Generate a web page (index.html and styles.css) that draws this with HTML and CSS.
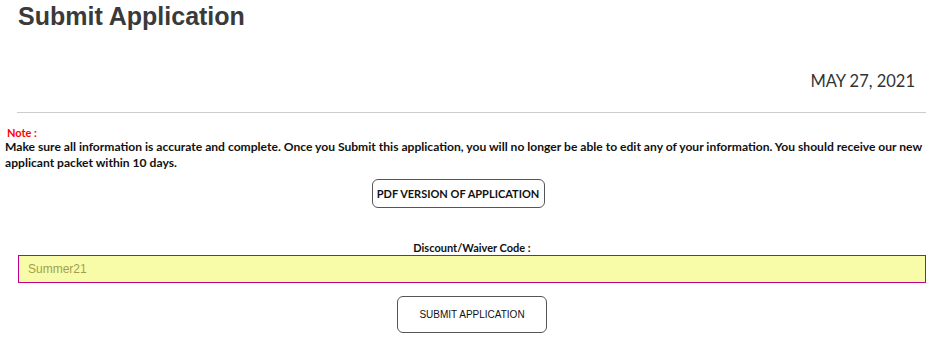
FILE: index.html
```html
<!DOCTYPE html>
<html lang="en">
<head>
    <meta charset="UTF-8">
    <title>Submit Application</title>
    <link rel="stylesheet" href="styles.css">
</head>
<body>
    <h1 class="page-title">Submit Application</h1>

    <div class="date-row">MAY 27, 2021</div>
    <hr class="divider">

    <div class="note">
        <div class="note-label">Note :</div>
        <p class="note-text">Make sure all information is accurate and complete. Once you Submit this application, you will no longer be able to edit any of your information. You should receive our new applicant packet within 10 days.</p>
    </div>

    <div class="center">
        <button class="btn btn-pdf" type="button">PDF VERSION OF APPLICATION</button>
    </div>

    <div class="discount">
        <label class="discount-label" for="discount">Discount/Waiver Code :</label>
        <input class="discount-input" id="discount" type="text" placeholder="Summer21">
    </div>

    <div class="center">
        <button class="btn btn-submit" type="submit">SUBMIT APPLICATION</button>
    </div>
</body>
</html>
```

FILE: styles.css
```css
body {
    margin: 0;
    font-family: Lato, 'Noto Sans', sans-serif;
    color: #111;
    background: #fff;
}
.page-title {
    margin: 0;
    padding: 2px 18px 0;
    font-family: 'Liberation Sans', Arial, sans-serif;
    font-size: 25px;
    font-weight: bold;
    color: #3a3a3a;
}
.date-row {
    margin-top: 40px;
    padding-right: 21px;
    text-align: right;
    font-size: 16.5px;
    color: #333;
}
.divider {
    margin: 21px 10px 0 17px;
    border: 0;
    border-top: 1px solid #ccc;
}
.note {
    padding: 13px 5px 0 5px;
}
.note-label {
    padding-left: 2px;
    font-size: 11px;
    font-weight: bold;
    color: #f00;
}
.note-text {
    margin: 0;
    font-size: 12.1px;
    font-weight: bold;
    line-height: 16px;
    color: #111;
}
.center {
    display: flex;
    justify-content: center;
}
.btn {
    background: #fff;
    border: 1px solid #555;
    border-radius: 6px;
    cursor: pointer;
    white-space: nowrap;
}
.btn-pdf {
    margin: 8px 20px 0 0;
    width: 173px;
    height: 29px;
    padding: 0;
    font-family: Lato, 'Noto Sans', sans-serif;
    font-size: 11px;
    font-weight: bold;
    color: #111;
}
.discount {
    padding: 33px 10px 0 18px;
    text-align: center;
}
.discount-label {
    display: block;
    font-size: 11px;
    font-weight: bold;
    color: #111;
}
.discount-input {
    display: block;
    box-sizing: border-box;
    width: 100%;
    height: 28px;
    margin-top: 1px;
    padding: 0 9px;
    background: #f8fca8;
    border: 1px solid #c0008f;
    font-family: 'Liberation Sans', Arial, sans-serif;
    font-size: 12px;
}
.discount-input::placeholder {
    color: #a0a050;
}
.btn-submit {
    margin: 13px 0 0 8px;
    width: 150px;
    height: 37px;
    padding: 0;
    font-family: 'Liberation Sans', Arial, sans-serif;
    font-size: 10px;
    color: #111;
}
```
